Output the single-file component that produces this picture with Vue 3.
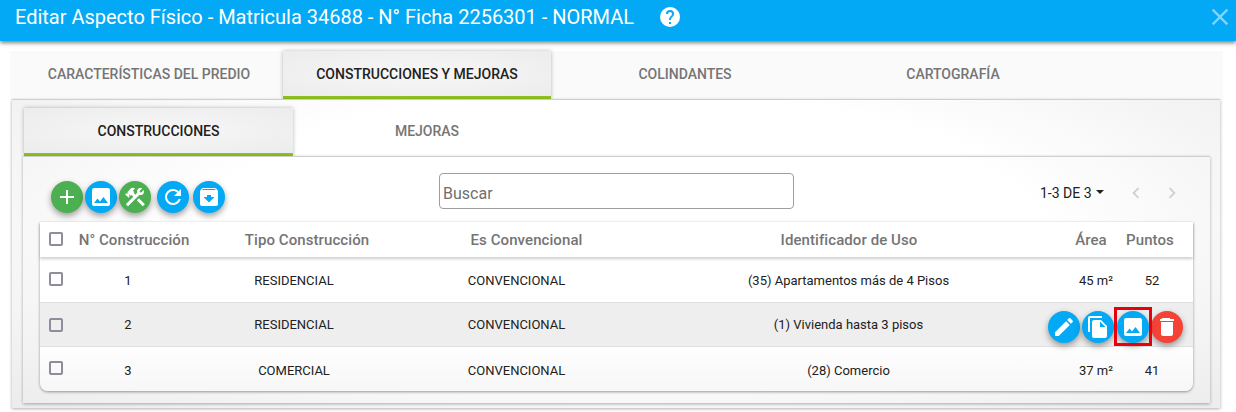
<template>
  <div class="page">
    <header class="topbar">
      <span class="title">Editar Aspecto Físico - Matricula 34688 - N° Ficha 2256301 - NORMAL</span>
      <svg class="help" viewBox="0 0 24 24"><path :d="icons.help" /></svg>
      <svg class="close" viewBox="0 0 24 24"><path d="M19 6.41L17.59 5 12 10.59 6.41 5 5 6.41 10.59 12 5 17.59 6.41 19 12 13.41 17.59 19 19 17.59 13.41 12z" /></svg>
    </header>

    <div class="outer">
      <nav class="tabs">
        <a v-for="t in mainTabs" :key="t" class="tab" :class="{ active: t === 'CONSTRUCCIONES Y MEJORAS' }">{{ t }}</a>
      </nav>

      <div class="panel">
        <nav class="tabs sub">
          <a class="tab active">CONSTRUCCIONES</a>
          <a class="tab">MEJORAS</a>
        </nav>

        <div class="inner">
          <div class="toolbar">
            <div class="tools">
              <button v-for="b in toolButtons" :key="b.icon" class="fab" :class="b.color">
                <svg viewBox="0 0 24 24"><path :d="icons[b.icon]" /></svg>
              </button>
            </div>
            <input class="search" placeholder="Buscar" />
            <div class="pager">
              <span>1-3 DE 3</span>
              <i class="caret"></i>
              <svg class="chev first" viewBox="0 0 24 24"><path d="M15.41 7.41L14 6l-6 6 6 6 1.41-1.41L10.83 12z" /></svg>
              <svg class="chev" viewBox="0 0 24 24"><path d="M10 6L8.59 7.41 13.17 12l-4.58 4.59L10 18l6-6z" /></svg>
            </div>
          </div>

          <div class="table">
            <div class="thead">
              <span class="check"></span>
              <span v-for="h in headers" :key="h">{{ h }}</span>
            </div>
            <div v-for="row in rows" :key="row.num" class="row" :class="{ hover: row.num === 2 }">
              <span class="check"></span>
              <span>{{ row.num }}</span>
              <span>{{ row.tipo }}</span>
              <span>{{ row.conv }}</span>
              <span>{{ row.uso }}</span>
              <span>{{ row.area }}</span>
              <span>{{ row.puntos }}</span>
              <div v-if="row.num === 2" class="actions">
                <button class="fab blue"><svg viewBox="0 0 24 24"><path :d="icons.pencil" /></svg></button>
                <button class="fab blue"><svg viewBox="0 0 24 24"><path :d="icons.copy" /></svg></button>
                <button class="fab blue marked"><svg viewBox="0 0 24 24"><path :d="icons.image" /></svg></button>
                <button class="fab red"><svg viewBox="0 0 24 24"><path :d="icons.trash" /></svg></button>
              </div>
            </div>
          </div>
        </div>
      </div>
    </div>
  </div>
</template>

<script setup>
const icons = {
  help: 'M15.07,11.25L14.17,12.17C13.45,12.89 13,13.5 13,15H11V14.5C11,13.39 11.45,12.39 12.17,11.67L13.41,10.41C13.78,10.05 14,9.55 14,9C14,7.89 13.1,7 12,7A2,2 0 0,0 10,9H8A4,4 0 0,1 12,5A4,4 0 0,1 16,9C16,9.88 15.64,10.67 15.07,11.25M13,19H11V17H13M12,2A10,10 0 0,0 2,12A10,10 0 0,0 12,22A10,10 0 0,0 22,12C22,6.47 17.5,2 12,2Z',
  plus: 'M19 13h-6v6h-2v-6H5v-2h6V5h2v6h6v2z',
  image: 'M8.5,13.5L11,16.5L14.5,12L19,18H5M21,19V5C21,3.89 20.1,3 19,3H5A2,2 0 0,0 3,5V19A2,2 0 0,0 5,21H19A2,2 0 0,0 21,19Z',
  tools: 'M13.78 15.3L19.78 21.3L21.89 19.14L15.89 13.14L13.78 15.3M17.5 10.1C17.11 10.1 16.69 10.05 16.36 9.91L4.97 21.25L2.86 19.14L10.27 11.74L8.5 9.96L7.78 10.66L6.33 9.25V12.11L5.63 12.81L2.11 9.25L2.81 8.55H5.62L4.22 7.14L7.78 3.58C8.95 2.41 10.83 2.41 12 3.58L9.89 5.74L11.3 7.14L10.59 7.85L12.38 9.63L14.2 7.75C14.06 7.42 14 7 14 6.63C14 4.66 15.56 3.11 17.5 3.11C18.09 3.11 18.61 3.25 19.08 3.53L16.41 6.2L17.91 7.7L20.58 5.03C20.86 5.5 21 6 21 6.63C21 8.55 19.45 10.1 17.5 10.1Z',
  refresh: 'M17.65 6.35C16.2 4.9 14.21 4 12 4A8 8 0 0 0 4 12A8 8 0 0 0 12 20C15.73 20 18.84 17.45 19.73 14H17.65C16.83 16.33 14.61 18 12 18A6 6 0 0 1 6 12A6 6 0 0 1 12 6C13.66 6 15.14 6.69 16.22 7.78L13 11H20V4L17.65 6.35Z',
  archive: 'M20.54 5.23l-1.39-1.68C18.88 3.21 18.47 3 18 3H6c-.47 0-.88.21-1.16.55L3.46 5.23C3.17 5.57 3 6.02 3 6.5V19c0 1.1.9 2 2 2h14c1.1 0 2-.9 2-2V6.5c0-.48-.17-.93-.46-1.27zM12 17.5L6.5 12H10v-2h4v2h3.5L12 17.5zM5.12 5l.81-1h12l.94 1H5.12z',
  pencil: 'M20.71,7.04C21.1,6.65 21.1,6 20.71,5.63L18.37,3.29C18,2.9 17.35,2.9 16.96,3.29L15.12,5.12L18.87,8.87M3,17.25V21H6.75L17.81,9.93L14.06,6.18L3,17.25Z',
  copy: 'M16 1H4c-1.1 0-2 .9-2 2v14h2V3h12V1zm-1 4l6 6v10c0 1.1-.9 2-2 2H7.99C6.89 23 6 22.1 6 21l.01-14c0-1.1.89-2 1.99-2h7zm-1 7h5.5L14 6.5V12z',
  trash: 'M6 19c0 1.1.9 2 2 2h8c1.1 0 2-.9 2-2V7H6v12zM19 4h-3.5l-1-1h-7l-1 1H5v2h14V4z'
}

const mainTabs = ['CARACTERÍSTICAS DEL PREDIO', 'CONSTRUCCIONES Y MEJORAS', 'COLINDANTES', 'CARTOGRAFÍA']

const toolButtons = [
  { icon: 'plus', color: 'green' },
  { icon: 'image', color: 'blue' },
  { icon: 'tools', color: 'green' },
  { icon: 'refresh', color: 'blue' },
  { icon: 'archive', color: 'blue' }
]

const headers = ['N° Construcción', 'Tipo Construcción', 'Es Convencional', 'Identificador de Uso', 'Área', 'Puntos']

const rows = [
  { num: 1, tipo: 'RESIDENCIAL', conv: 'CONVENCIONAL', uso: '(35) Apartamentos más de 4 Pisos', area: '45 m²', puntos: 52 },
  { num: 2, tipo: 'RESIDENCIAL', conv: 'CONVENCIONAL', uso: '(1) Vivienda hasta 3 pisos', area: '', puntos: '' },
  { num: 3, tipo: 'COMERCIAL', conv: 'CONVENCIONAL', uso: '(28) Comercio', area: '37 m²', puntos: 41 }
]
</script>

<style>
html, body {
  margin: 0;
  height: 412px;
  overflow: hidden;
  background: #fff;
}
</style>

<style scoped>
.page {
  font-family: Roboto, sans-serif;
  color: #212121;
}
.topbar {
  height: 41px;
  background: #03a9f4;
  box-shadow: 0 2px 4px rgba(0, 0, 0, 0.5);
  display: flex;
  align-items: center;
  padding: 0 2px 8px 15px;
  box-sizing: border-box;
  color: #fff;
}
.title {
  font-size: 20px;
  letter-spacing: -0.01px;
  white-space: nowrap;
}
.help {
  width: 24px;
  height: 24px;
  fill: #fff;
  margin-left: 24px;
}
.close {
  width: 28px;
  height: 28px;
  fill: rgba(255, 255, 255, 0.5);
  margin-left: auto;
}
.outer {
  margin: 10px 13px 0 10px;
  height: 359px;
  background: #fafafa;
  display: flex;
  flex-direction: column;
}
.tabs {
  display: flex;
  padding-left: 5px;
  height: 48px;
  flex: none;
}
.tab {
  width: 268px;
  display: flex;
  align-items: center;
  justify-content: center;
  font-size: 14px;
  font-weight: 500;
  color: #757575;
  box-sizing: border-box;
  border-bottom: 3px solid transparent;
}
.tab.active {
  color: #212121;
  background: radial-gradient(ellipse at center, #f7f7f7, #ececec);
  border-bottom-color: #8ebf1f;
  box-shadow: 0 0 4px rgba(0, 0, 0, 0.28);
}
.panel {
  margin: 0 3px 2px 2px;
  flex: 1;
  display: flex;
  flex-direction: column;
  background: radial-gradient(ellipse at 50% 40%, #fff 50%, #ececec 100%);
  border-top: 1px solid #cfcfcf;
  box-shadow: 0 1px 3px rgba(0, 0, 0, 0.28);
  min-height: 0;
}
.tabs.sub {
  margin-top: 8px;
  padding-left: 12px;
}
.tabs.sub .tab {
  width: 269px;
}
.tabs.sub .tab:last-child {
  width: 268px;
}
.inner {
  margin: 0 10px 5px 11px;
  flex: 1;
  padding: 0 17px;
  background: radial-gradient(ellipse at 50% 30%, #fff 50%, #ededed 100%);
  border-top: 1px solid #cfcfcf;
  box-shadow: 0 1px 3px rgba(0, 0, 0, 0.32);
  display: flex;
  flex-direction: column;
  min-height: 0;
}
.toolbar {
  height: 65px;
  display: grid;
  grid-template-columns: 399px 355px 1fr;
  flex: none;
}
.tools {
  display: flex;
  align-items: center;
  padding: 15px 0 0 11px;
  gap: 2px;
}
.tools .fab:nth-child(4) {
  margin-left: 4px;
}
.tools .fab:nth-child(5) {
  margin-left: 2px;
}
.fab {
  width: 32px;
  height: 32px;
  padding: 0;
  border: none;
  border-radius: 50%;
  display: flex;
  align-items: center;
  justify-content: center;
  box-shadow: 0 3px 6px rgba(0, 0, 0, 0.38);
}
.fab svg {
  width: 24px;
  height: 24px;
  fill: #fff;
}
.fab.green { background: #4caf50; }
.fab.blue { background: #03a9f4; }
.fab.red { background: #f44336; }
.search {
  width: 355px;
  height: 36px;
  margin-top: 16px;
  padding: 5px 3px 0;
  border: 1px solid #9e9e9e;
  border-radius: 4px;
  box-sizing: border-box;
  background: transparent;
  font: 16px Roboto, sans-serif;
  outline: none;
}
.search::placeholder {
  color: #6f6f6f;
}
.pager {
  display: flex;
  align-items: center;
  padding: 7px 0 0 246px;
  font-size: 14px;
  white-space: nowrap;
  color: #212121;
}
.caret {
  width: 0;
  height: 0;
  margin-left: 4px;
  margin-bottom: 2px;
  border: 4px solid transparent;
  border-top-color: #212121;
  border-bottom: none;
}
.chev {
  width: 22px;
  height: 22px;
  fill: #cfcfcf;
  margin-left: 14px;
  flex: none;
}
.chev.first {
  margin-left: 21px;
}
.table {
  background: linear-gradient(#fff 70%, #f7f7f7);
  border-radius: 0 0 8px 8px;
  box-shadow: 0 1px 3px rgba(0, 0, 0, 0.4);
  height: 169px;
  font-size: 13px;
}
.thead,
.row {
  display: grid;
  align-items: center;
  justify-items: center;
  position: relative;
}
.thead {
  grid-template-columns: 32px 124px 222px 217px 428px 56px 62px;
  height: 35px;
  font-size: 15px;
  font-weight: 500;
  letter-spacing: 0.08px;
  color: #757575;
  box-shadow: 0 2px 3px rgba(0, 0, 0, 0.2);
}
.row {
  grid-template-columns: 32px 112px 220px 225px 439px 56px 56px;
  height: 45px;
  padding-top: 2px;
  box-sizing: border-box;
}
.row:last-child {
  height: 44px;
}
.row.hover {
  padding-top: 0;
  background: #eeeeee;
  border-top: 1px solid #e0e0e0;
  border-bottom: 1px solid #e0e0e0;
}
.check {
  width: 14px;
  height: 14px;
  border: 2px solid #8f8c9c;
  border-radius: 2px;
  box-sizing: border-box;
  justify-self: start;
  margin-left: 9px;
}
.thead .check {
  margin-bottom: 1px;
}
.row:not(.hover) .check {
  margin-bottom: 4px;
}
.actions {
  position: absolute;
  top: 8px;
  left: 1008px;
  display: flex;
  gap: 2px;
}
.fab.marked {
  margin-left: 1px;
  position: relative;
}
.fab.marked::after {
  content: "";
  position: absolute;
  top: -4px;
  left: -3px;
  width: 38px;
  height: 39px;
  border: 3px solid #e8000b;
  box-sizing: border-box;
}
</style>
